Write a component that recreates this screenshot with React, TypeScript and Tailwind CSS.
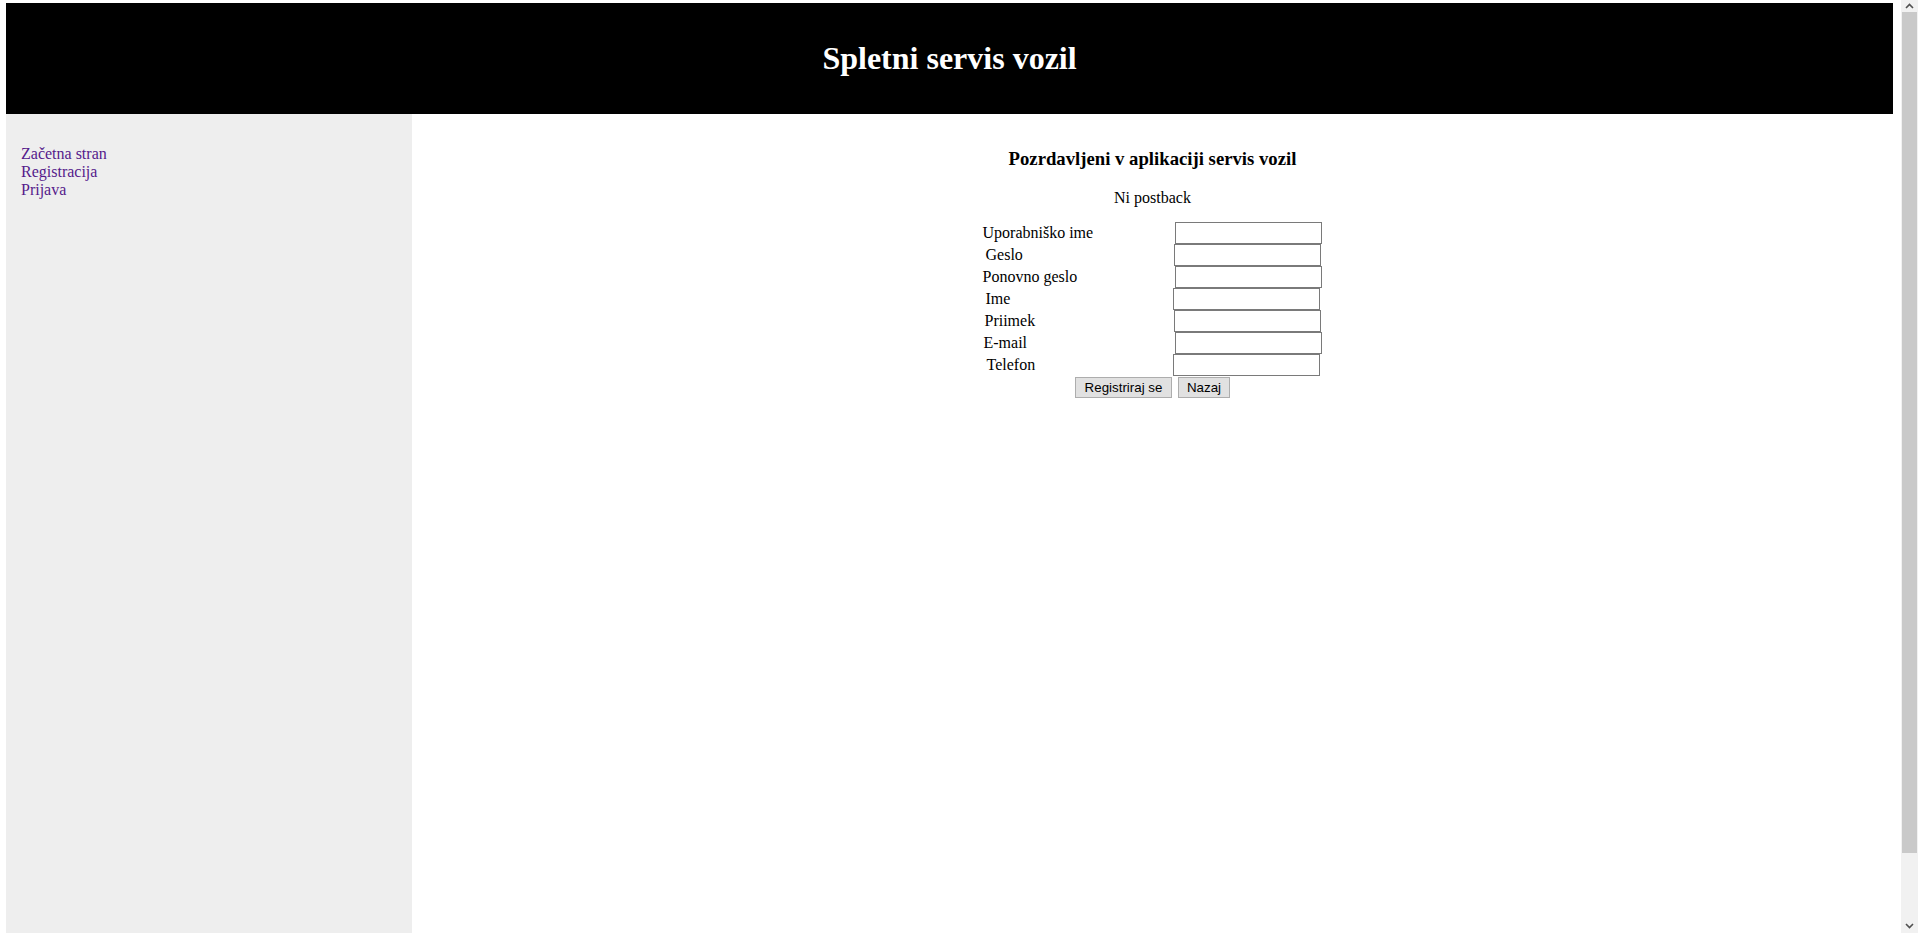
const fields = [
  { label: 'Uporabniško ime', pl: 'pl-0', mr: 'mr-[1px]' },
  { label: 'Geslo', pl: 'pl-[3px]', mr: 'mr-[2px]' },
  { label: 'Ponovno geslo', pl: 'pl-0', mr: 'mr-[1px]' },
  { label: 'Ime', pl: 'pl-[3px]', mr: 'mr-[3px]' },
  { label: 'Priimek', pl: 'pl-[2px]', mr: 'mr-[2px]' },
  { label: 'E-mail', pl: 'pl-[1px]', mr: 'mr-[1px]' },
  { label: 'Telefon', pl: 'pl-[4px]', mr: 'mr-[3px]' },
];

const links = ['Začetna stran', 'Registracija', 'Prijava'];

// fake browser scrollbar, the page in the reference is a bit taller than the window
const Scrollbar = () => (
  <div className="flex w-[17px] shrink-0 flex-col bg-[#f1f1f1]">
    <div className="flex h-[12px] items-center justify-center">
      <svg width="9" height="6" viewBox="0 0 9 6">
        <path d="M1 5 L4.5 1.5 L8 5" fill="none" stroke="#505050" strokeWidth="1.6" />
      </svg>
    </div>
    <div className="mx-[1px] h-[841px] bg-[#c9c9c9]" />
    <div className="flex-1" />
    <div className="flex h-[14px] items-center justify-center">
      <svg width="9" height="6" viewBox="0 0 9 6">
        <path d="M1 1 L4.5 4.5 L8 1" fill="none" stroke="#505050" strokeWidth="1.6" />
      </svg>
    </div>
  </div>
);

export default function App() {
  return (
    <div className="flex h-[933px] w-[1918px] overflow-hidden bg-white font-['Liberation_Serif',serif] text-[16px] leading-[normal] text-black">
      <div className="flex w-[1901px] flex-col pl-[6px] pr-[8px] pt-[3px]">
        {/* header */}
        <div className="flex h-[111px] items-center justify-center bg-black">
          <h1 className="text-[32px] font-bold leading-[normal] text-white">Spletni servis vozil</h1>
        </div>

        <div className="flex flex-1">
          {/* sidebar */}
          <div className="w-[406px] shrink-0 bg-[#eeeeee] pl-[15px] pt-[31px]">
            {links.map(l => (
              <div key={l}>
                <a href="#" className="text-[#551a8b]">
                  {l}
                </a>
              </div>
            ))}
          </div>

          {/* main */}
          <div className="flex flex-1 flex-col items-center pt-[34px]">
            <h3 className="text-[18.72px] font-bold leading-[normal]">Pozrdavljeni v aplikaciji servis vozil</h3>
            <p className="mt-[19px]">Ni postback</p>

            <div className="mt-[15px] w-[340px]">
              {fields.map(f => (
                <div key={f.label} className="flex h-[22px] items-center">
                  <span className={`flex-1 ${f.pl}`}>{f.label}</span>
                  <input
                    type="text"
                    className={`h-[22px] w-[147px] border border-[#7a7a7a] bg-white ${f.mr}`}
                  />
                </div>
              ))}
            </div>

            <div className="mt-px flex gap-[6px] font-['Liberation_Sans',sans-serif] text-[13.33px]">
              <button className="h-[21px] w-[97px] border border-[#adadad] bg-[#e1e1e1]">Registriraj se</button>
              <button className="h-[21px] w-[52px] border border-[#adadad] bg-[#e1e1e1]">Nazaj</button>
            </div>
          </div>
        </div>
      </div>
      <Scrollbar />
    </div>
  );
}
